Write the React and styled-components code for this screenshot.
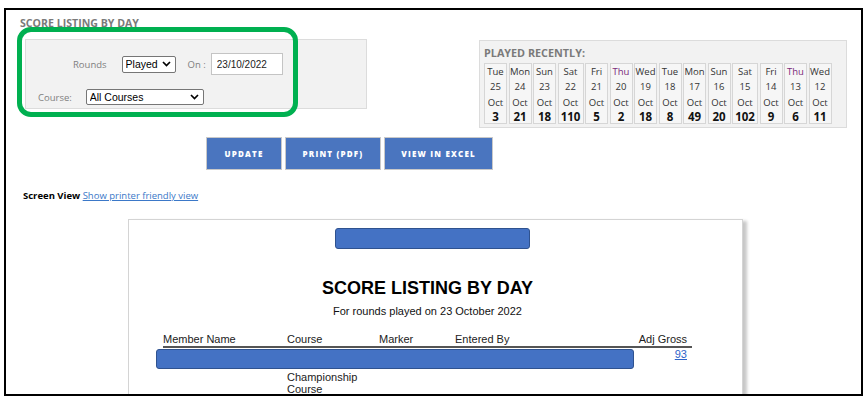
import React from "react";
import styled, { createGlobalStyle } from "styled-components";

const Global = createGlobalStyle`
  html, body { margin: 0; padding: 0; background: #fff; }
  body { font-family: "Open Sans", Arial, sans-serif; }
`;

const Frame = styled.div`
  box-sizing: border-box;
  margin: 8px 0 0 4px;
  width: 859px;
  height: 388px;
  border: 2px solid #000;
  overflow: hidden;
`;

const Page = styled.div`
  position: relative;
  padding: 6px 14px 0 14px;
`;

const Heading = styled.div`
  font-family: "Open Sans", sans-serif;
  font-weight: 700;
  font-size: 10.6px;
  line-height: 14px;
  color: #7a7a7a;
  text-transform: uppercase;
`;

const TopRow = styled.div`
  display: flex;
  align-items: flex-start;
  margin-top: 9px;
`;

const FilterPanel = styled.div`
  box-sizing: border-box;
  margin-left: 5px;
  width: 342px;
  height: 70px;
  background: #f2f2f2;
  border: 1px solid #dcdcdc;
`;

const FilterRow = styled.div`
  display: flex;
  align-items: center;
  height: ${(p) => p.h}px;
  margin-top: ${(p) => p.mt}px;
  padding-left: ${(p) => p.pl}px;
`;

const Label = styled.span`
  font-family: "Open Sans", sans-serif;
  font-size: 9.5px;
  color: #808080;
  margin-right: ${(p) => p.mr}px;
`;

const SelectWrap = styled.span`
  position: relative;
  display: inline-flex;
  margin-right: ${(p) => p.mr || 0}px;
`;

const Select = styled.select`
  appearance: none;
  box-sizing: border-box;
  width: ${(p) => p.w}px;
  height: ${(p) => p.h}px;
  padding: 0 0 0 3px;
  border: 1px solid #767676;
  border-radius: 2px;
  background: #fff;
  font-family: "Liberation Sans", Arial, sans-serif;
  font-size: 10.5px;
  color: #000;
  outline: none;
`;

const Chevron = styled.svg`
  position: absolute;
  right: 5px;
  top: 50%;
  margin-top: -3px;
  pointer-events: none;
`;

const DateInput = styled.input`
  box-sizing: border-box;
  width: 72px;
  height: 22px;
  padding: 0 0 0 5px;
  border: 1px solid #c4c4c4;
  background: #fff;
  font-family: "Liberation Sans", Arial, sans-serif;
  font-size: 10px;
  color: #222;
  outline: none;
`;

const RecentPanel = styled.div`
  box-sizing: border-box;
  margin-left: auto;
  margin-top: 1px;
  width: 368px;
  height: 88px;
  padding: 5px 4px 0 4px;
  background: #f2f2f2;
  border: 1px solid #dcdcdc;
`;

const RecentTitle = styled.div`
  font-family: "Open Sans", sans-serif;
  font-weight: 700;
  font-size: 10.8px;
  line-height: 14px;
  color: #7a7a7a;
`;

const DayStrip = styled.div`
  display: flex;
  gap: 1.5px;
  margin-top: 3px;
`;

const DayCell = styled.div`
  box-sizing: border-box;
  width: ${(p) => (p.wide ? 26 : 23)}px;
  height: 61px;
  border: 1px solid #d6d6d6;
  background: #f6f6f6;
  display: flex;
  flex-direction: column;
  align-items: center;
`;

const DayText = styled.span`
  font-family: "Open Sans", sans-serif;
  font-size: 9.5px;
  line-height: 15.3px;
  color: ${(p) => (p.purple ? "#7a2a7a" : "#333")};
  white-space: nowrap;
`;

const Count = styled.span`
  font-family: "Open Sans", sans-serif;
  font-weight: 700;
  font-size: 11.5px;
  line-height: 14px;
  color: #111;
`;

const ButtonRow = styled.div`
  display: flex;
  gap: 3px;
  margin-top: 9px;
  padding-left: 186px;
`;

const Button = styled.button`
  box-sizing: border-box;
  width: ${(p) => p.w}px;
  height: 33px;
  background: #4a75bf;
  border: 1px solid #c9c9c9;
  color: #fff;
  font-family: "Open Sans", sans-serif;
  font-weight: 800;
  font-size: 8px;
  letter-spacing: 1.2px;
  text-transform: uppercase;
  padding: 0;
`;

const ViewLine = styled.div`
  margin: 19px 0 0 3px;
  font-family: "Open Sans", sans-serif;
  font-size: 9.5px;
  line-height: 14px;
  color: #000;
`;

const Bold = styled.b`
  font-weight: 700;
`;

const ViewLink = styled.a`
  color: #3b78c8;
  text-decoration: underline;
`;

const Paper = styled.div`
  box-sizing: border-box;
  margin: 16px 0 0 108px;
  width: 615px;
  height: 200px;
  background: #fff;
  border: 1px solid #d4d4d4;
  box-shadow: 4px 2px 3px rgba(0, 0, 0, 0.22);
  padding: 8px 16px 0 0;
  font-family: "Liberation Sans", Arial, sans-serif;
  color: #111;
`;

const LogoRow = styled.div`
  display: flex;
  justify-content: center;
  padding-left: 10px;
`;

const Redact = styled.div`
  box-sizing: border-box;
  height: ${(p) => p.h}px;
  width: ${(p) => (p.w ? `${p.w}px` : "auto")};
  background: #4472c4;
  border: 1px solid #2f528f;
  border-radius: 3px;
`;

const Title = styled.div`
  margin-top: 29px;
  text-align: center;
  font-weight: 700;
  font-size: 18px;
  line-height: 21px;
  color: #000;
`;

const Subtitle = styled.div`
  margin-top: 6px;
  text-align: center;
  font-size: 11px;
  line-height: 13px;
  color: #111;
`;

const Table = styled.div`
  display: grid;
  grid-template-columns: 124px 92px 76px 1fr auto;
  margin: 15px 0 0 34px;
  width: 529px;
`;

const Th = styled.div`
  font-size: 11px;
  line-height: 13px;
  color: #222;
  border-bottom: 2px solid #555;
  text-align: ${(p) => (p.right ? "right" : "left")};
  padding-right: ${(p) => (p.right ? 5 : 0)}px;
`;

const BarCell = styled.div`
  grid-column: 1 / 5;
  margin: 1px 5px 0 -7px;
`;

const ScoreCell = styled.div`
  text-align: right;
  padding-right: 5px;
  font-size: 11px;
  line-height: 13px;
`;

const ScoreLink = styled.a`
  color: #2d64c8;
  text-decoration: underline;
`;

const Td = styled.div`
  grid-column: ${(p) => p.col};
  margin-top: 2px;
  font-size: 11px;
  line-height: 12px;
  color: #222;
`;

const Annotation = styled.div`
  position: absolute;
  left: 11px;
  top: 17px;
  width: 281px;
  height: 90px;
  box-sizing: border-box;
  border: 5px solid #00b050;
  border-radius: 14px;
  pointer-events: none;
`;

const days = [
  ["Tue", 25, 3],
  ["Mon", 24, 21],
  ["Sun", 23, 18],
  ["Sat", 22, 110],
  ["Fri", 21, 5],
  ["Thu", 20, 2],
  ["Wed", 19, 18],
  ["Tue", 18, 8],
  ["Mon", 17, 49],
  ["Sun", 16, 20],
  ["Sat", 15, 102],
  ["Fri", 14, 9],
  ["Thu", 13, 6],
  ["Wed", 12, 11],
];

const ChevronIcon = () => (
  <Chevron width="9" height="6" viewBox="0 0 9 6">
    <path d="M1 1l3.5 3.5L8 1" fill="none" stroke="#000" strokeWidth="1.7" />
  </Chevron>
);

export default function App() {
  return (
    <>
      <Global />
      <Frame>
        <Page>
          <Heading>Score Listing by Day</Heading>
          <TopRow>
            <FilterPanel>
              <FilterRow h={22} mt={13} pl={47}>
                <Label mr={15}>Rounds</Label>
                <SelectWrap mr={12}>
                  <Select w={54} h={17} defaultValue="Played">
                    <option>Played</option>
                    <option>Entered</option>
                  </Select>
                  <ChevronIcon />
                </SelectWrap>
                <Label mr={5}>On :</Label>
                <DateInput defaultValue="23/10/2022" />
              </FilterRow>
              <FilterRow h={16} mt={14} pl={12}>
                <Label mr={14}>Course:</Label>
                <SelectWrap>
                  <Select w={118} h={16} defaultValue="All Courses">
                    <option>All Courses</option>
                    <option>Championship Course</option>
                  </Select>
                  <ChevronIcon />
                </SelectWrap>
              </FilterRow>
            </FilterPanel>
            <RecentPanel>
              <RecentTitle>PLAYED RECENTLY:</RecentTitle>
              <DayStrip>
                {days.map(([d, n, c], i) => (
                  <DayCell key={i} wide={c >= 100}>
                    <DayText purple={d === "Thu"}>{d}</DayText>
                    <DayText>{n}</DayText>
                    <DayText>Oct</DayText>
                    <Count>{c}</Count>
                  </DayCell>
                ))}
              </DayStrip>
            </RecentPanel>
          </TopRow>
          <ButtonRow>
            <Button w={76}>Update</Button>
            <Button w={96}>Print (PDF)</Button>
            <Button w={109}>View in Excel</Button>
          </ButtonRow>
          <ViewLine>
            <Bold>Screen View</Bold> <ViewLink href="#">Show printer friendly view</ViewLink>
          </ViewLine>
          <Paper>
            <LogoRow>
              <Redact w={195} h={21} />
            </LogoRow>
            <Title>SCORE LISTING BY DAY</Title>
            <Subtitle>For rounds played on 23 October 2022</Subtitle>
            <Table>
              <Th>Member Name</Th>
              <Th>Course</Th>
              <Th>Marker</Th>
              <Th>Entered By</Th>
              <Th right>Adj Gross</Th>
              <BarCell>
                <Redact h={20} />
              </BarCell>
              <ScoreCell>
                <ScoreLink href="#">93</ScoreLink>
              </ScoreCell>
              <Td col="2">
                Championship
                <br />
                Course
              </Td>
            </Table>
          </Paper>
          <Annotation />
        </Page>
      </Frame>
    </>
  );
}
